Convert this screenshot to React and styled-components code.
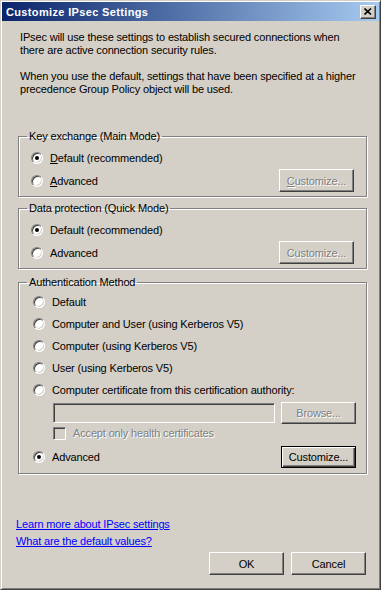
import React from "react";
import styled, { createGlobalStyle } from "styled-components";

const GlobalStyle = createGlobalStyle`
  html, body {
    margin: 0;
    padding: 0;
    background: #d4d0c8;
  }
`;

const Window = styled.div`
  width: 381px;
  height: 590px;
  box-sizing: border-box;
  background: #d4d0c8;
  border: 1px solid;
  border-color: #d4d0c8 #404040 #404040 #d4d0c8;
  box-shadow: inset 1px 1px 0 #fff, inset -1px -1px 0 #808080;
  padding: 1px;
  display: flex;
  flex-direction: column;
  font-family: "Liberation Sans", Arial, sans-serif;
  font-size: 11px;
  letter-spacing: -0.15px;
  color: #000;
`;

const TitleBar = styled.div`
  height: 19px;
  flex: none;
  display: flex;
  align-items: center;
  justify-content: space-between;
  padding: 0 3px 0 4px;
  background: linear-gradient(to right, #0a246a, #a6caf0);
  color: #fff;
  font-weight: bold;
  font-size: 11px;
  letter-spacing: 0.35px;
`;

const CloseButton = styled.span`
  width: 16px;
  height: 14px;
  box-sizing: border-box;
  display: flex;
  align-items: center;
  justify-content: center;
  background: #d4d0c8;
  border: 1px solid;
  border-color: #fff #404040 #404040 #fff;
  box-shadow: inset -1px -1px 0 #808080;
`;

const Body = styled.div`
  flex: 1;
  display: flex;
  flex-direction: column;
  padding: 10px 12px 13px 14px;
`;

const Intro = styled.p`
  margin: ${(p) => p.$top || 0}px 0 0 4px;
  line-height: 13px;
`;

const GroupBox = styled.fieldset`
  margin: ${(p) => p.$top}px 0 0 2px;
  padding: 0;
  min-width: 0;
  border: 1px solid #808080;
  box-shadow: inset 1px 1px 0 #fff, 1px 1px 0 #fff;
`;

const Legend = styled.legend`
  margin-left: 8px;
  padding: 0 2px;
  line-height: 13px;
`;

const GroupContent = styled.div`
  padding: ${(p) => p.$padTop}px ${(p) => p.$padRight}px ${(p) => p.$padBottom}px
    ${(p) => p.$padLeft}px;
`;

const Row = styled.div`
  display: flex;
  align-items: center;
  height: ${(p) => p.$h || 22}px;
  margin-top: ${(p) => p.$top || 0}px;
`;

const Option = styled.label`
  display: flex;
  align-items: center;
  flex: 1;
  color: ${(p) => (p.$disabled ? "#808080" : "#000")};
  text-shadow: ${(p) => (p.$disabled ? "1px 1px 0 #fff" : "none")};
`;

const RadioCircle = styled.span`
  position: relative;
  flex: none;
  width: 12px;
  height: 12px;
  box-sizing: border-box;
  border-radius: 50%;
  background: #fff;
  border: 1px solid;
  border-color: #808080 #fff #fff #808080;
  box-shadow: inset 1px 1px 0 #404040, inset -1px -1px 0 #d4d0c8;
  margin-right: 7px;

  &::after {
    content: "";
    display: ${(p) => (p.$checked ? "block" : "none")};
    position: absolute;
    left: 3px;
    top: 3px;
    width: 4px;
    height: 4px;
    border-radius: 50%;
    background: #000;
  }
`;

const CheckBox = styled.span`
  flex: none;
  width: 13px;
  height: 13px;
  box-sizing: border-box;
  background: #d4d0c8;
  border: 1px solid;
  border-color: #808080 #fff #fff #808080;
  box-shadow: inset 1px 1px 0 #404040, inset -1px -1px 0 #d4d0c8;
  margin: 0 7px 0 20px;
`;

const TextBox = styled.div`
  flex: 1;
  height: 20px;
  box-sizing: border-box;
  margin: 0 6px 0 20px;
  background: #d4d0c8;
  border: 1px solid;
  border-color: #808080 #fff #fff #808080;
  box-shadow: inset 1px 1px 0 #404040, inset -1px -1px 0 #d4d0c8;
`;

const Button = styled.button`
  flex: none;
  width: 75px;
  height: ${(p) => p.$h || 23}px;
  box-sizing: border-box;
  padding: 0;
  background: #d4d0c8;
  font-family: inherit;
  font-size: 11px;
  letter-spacing: inherit;
  color: ${(p) => (p.disabled ? "#808080" : "#000")};
  text-shadow: ${(p) => (p.disabled ? "1px 1px 0 #fff" : "none")};
  border: 1px solid;
  border-color: ${(p) =>
    p.$default ? "#000" : "#fff #404040 #404040 #fff"};
  box-shadow: ${(p) =>
    p.$default
      ? "inset 1px 1px 0 #fff, inset -1px -1px 0 #404040, inset -2px -2px 0 #808080"
      : "inset -1px -1px 0 #808080, inset 1px 1px 0 #d4d0c8"};
`;

const Footer = styled.div`
  margin-top: auto;
  display: flex;
  flex-direction: column;
`;

const Links = styled.div`
  display: flex;
  flex-direction: column;
  align-items: flex-start;
  line-height: 17px;
  margin-bottom: 2px;
`;

const HelpLink = styled.a`
  color: #0000ff;
  text-decoration: underline;
  cursor: pointer;
`;

const ButtonRow = styled.div`
  display: flex;
  justify-content: flex-end;
  gap: 7px;
  margin-right: 1px;
`;

const Radio = ({ checked, children }) => (
  <Option>
    <RadioCircle $checked={checked} />
    <span>{children}</span>
  </Option>
);

const App = () => {
  return (
    <>
      <GlobalStyle />
      <Window>
        <TitleBar>
          <span>Customize IPsec Settings</span>
          <CloseButton>
            <svg width="8" height="7" viewBox="0 0 8 7">
              <path d="M0.5 0.5 L7 6.5 M7 0.5 L0.5 6.5" stroke="#000" strokeWidth="1.6" />
            </svg>
          </CloseButton>
        </TitleBar>
        <Body>
          <Intro>
            IPsec will use these settings to establish secured connections when
            <br />
            there are active connection security rules.
          </Intro>
          <Intro $top={13}>
            When you use the default, settings that have been specified at a higher
            <br />
            precedence Group Policy object will be used.
          </Intro>

          <GroupBox $top={34}>
            <Legend>Key exchange (Main Mode)</Legend>
            <GroupContent $padTop={4} $padRight={12} $padBottom={4} $padLeft={12}>
              <Row>
                <Radio checked>
                  <u>D</u>efault (recommended)
                </Radio>
              </Row>
              <Row $h={23}>
                <Radio>
                  <u>A</u>dvanced
                </Radio>
                <Button disabled>
                  <u>C</u>ustomize...
                </Button>
              </Row>
            </GroupContent>
          </GroupBox>

          <GroupBox $top={5}>
            <Legend>Data protection (Quick Mode)</Legend>
            <GroupContent $padTop={4} $padRight={12} $padBottom={4} $padLeft={12}>
              <Row>
                <Radio checked>Default (recommended)</Radio>
              </Row>
              <Row $h={23}>
                <Radio>Advanced</Radio>
                <Button disabled>Customize...</Button>
              </Row>
            </GroupContent>
          </GroupBox>

          <GroupBox $top={7}>
            <Legend>Authentication Method</Legend>
            <GroupContent $padTop={2} $padRight={10} $padBottom={5} $padLeft={14}>
              <Row>
                <Radio>Default</Radio>
              </Row>
              <Row>
                <Radio>Computer and User (using Kerberos V5)</Radio>
              </Row>
              <Row>
                <Radio>Computer (using Kerberos V5)</Radio>
              </Row>
              <Row>
                <Radio>User (using Kerberos V5)</Radio>
              </Row>
              <Row>
                <Radio>Computer certificate from this certification authority:</Radio>
              </Row>
              <Row $h={23}>
                <TextBox />
                <Button disabled $h={22}>
                  Browse...
                </Button>
              </Row>
              <Row $h={18}>
                <Option $disabled>
                  <CheckBox />
                  <span>Accept only health certificates</span>
                </Option>
              </Row>
              <Row $top={4}>
                <Radio checked>Advanced</Radio>
                <Button $default $h={22}>
                  Customize...
                </Button>
              </Row>
            </GroupContent>
          </GroupBox>

          <Footer>
            <Links>
              <HelpLink>Learn more about IPsec settings</HelpLink>
              <HelpLink>What are the default values?</HelpLink>
            </Links>
            <ButtonRow>
              <Button>OK</Button>
              <Button>Cancel</Button>
            </ButtonRow>
          </Footer>
        </Body>
      </Window>
    </>
  );
};

export default App;
